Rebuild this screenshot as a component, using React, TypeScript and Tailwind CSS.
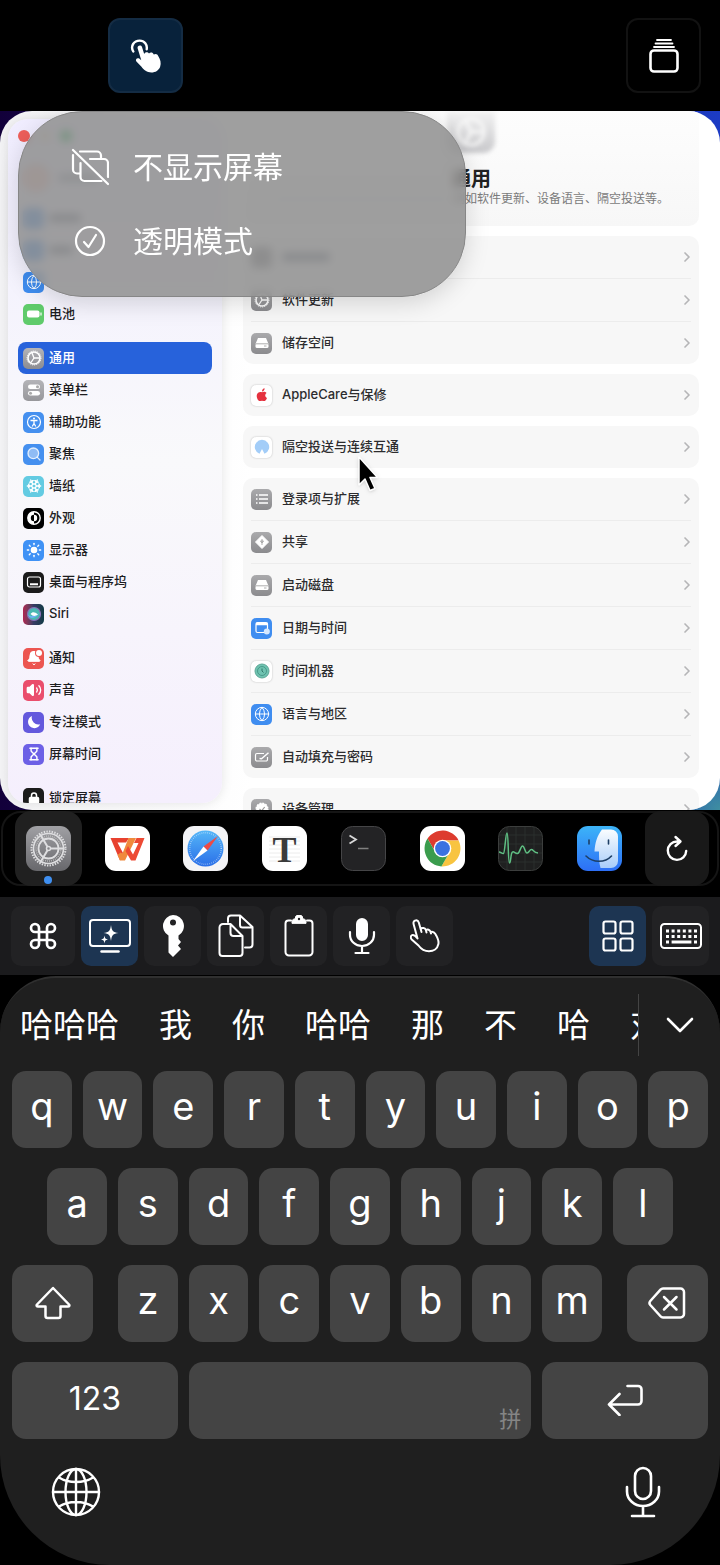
import type { ReactNode } from 'react';
import { Bell, ChevronRight, Command, Hourglass, Lock, Search, Snowflake, Sun, Volume2, Globe } from 'lucide-react';
import clsx from 'clsx';

/* ---------- Small tile glyphs (all on a 20x20 canvas) ---------- */

function Glyph({ children }: { children: ReactNode }) {
  return (
    <svg viewBox="0 0 20 20" className="h-5 w-5" fill="none" stroke="white" aria-hidden="true">
      {children}
    </svg>
  );
}

const gearGlyph = (
  <Glyph>
    <circle cx="10" cy="10" r="6" strokeWidth="1.6" />
    <circle cx="10" cy="10" r="7" strokeWidth="1" strokeDasharray="1 1" />
    <path d="M10 10 8 5M10 10l5.500 0M10 10l-3 4.500" strokeWidth="1.300" />
  </Glyph>
);

const diskGlyph = (
  <Glyph>
    <path d="M6 5h8l2.500 6h-13z" fill="white" stroke="none" />
    <rect x="3.500" y="10.500" width="13" height="4.500" rx="1.500" fill="white" stroke="none" />
    <path d="M4 10.800h12M12 13h2.500" stroke="#999" strokeWidth=".8" />
  </Glyph>
);

const globeGlyph = <Globe className="h-4 w-4 text-white" strokeWidth={1.5} />;

type Item = { label: string; tile: string; icon: ReactNode };

const sidebarGroups: Item[][] = [
  [
    { label: '通用', tile: 'bg-linear-to-b from-[#b4b4b8] to-[#8c8c91]', icon: gearGlyph },
    {
      label: '菜单栏',
      tile: 'bg-linear-to-b from-[#b4b4b8] to-[#97979b]',
      icon: (
        <Glyph>
          <rect x="4" y="4.500" width="12" height="4.500" rx="2.250" fill="white" stroke="none" />
          <rect x="4" y="11" width="12" height="4.500" rx="2.250" fill="white" stroke="none" />
          <circle cx="13.500" cy="6.750" r="1.500" fill="#aaa" stroke="none" />
          <circle cx="6.500" cy="13.250" r="1.500" fill="#aaa" stroke="none" />
        </Glyph>
      ),
    },
    {
      label: '辅助功能',
      tile: 'bg-[#4590ef]',
      icon: (
        <Glyph>
          <circle cx="10" cy="10" r="6.500" strokeWidth="1.200" />
          <circle cx="10" cy="6.500" r="1" fill="white" stroke="none" />
          <path d="M6.500 8.500h7M10 8.500v3l-1.800 3M10 11.500l1.800 3" strokeWidth="1.300" />
        </Glyph>
      ),
    },
    { label: '聚焦', tile: 'bg-[#4590ef]', icon: <Search className="h-4 w-4 fill-white/40 text-white/80" strokeWidth={2} /> },
    {
      label: '墙纸',
      tile: 'bg-[#63cbe2]',
      icon: (
        <span className="relative flex items-center justify-center">
          <Snowflake className="h-4 w-4 text-white" strokeWidth={2} />
          <span className="absolute h-3 w-3 rounded-full border border-white/80" />
        </span>
      ),
    },
    {
      label: '外观',
      tile: 'bg-black',
      icon: (
        <Glyph>
          <circle cx="10" cy="10" r="6.200" strokeWidth="1.400" />
          <path d="M10 3.800a6.200 6.200 0 0 0 0 12.400v-3a3.200 3.200 0 0 1 0-6.400z" fill="white" stroke="none" />
          <path d="M10 6.800a3.200 3.200 0 0 1 0 6.400z" fill="white" stroke="none" />
        </Glyph>
      ),
    },
    { label: '显示器', tile: 'bg-[#4092f5]', icon: <Sun className="h-4 w-4 fill-white text-white" strokeWidth={2} /> },
    {
      label: '桌面与程序坞',
      tile: 'bg-[#1b1b1b]',
      icon: (
        <Glyph>
          <rect x="3.500" y="5" width="13" height="10" rx="2" strokeWidth="1.200" />
          <path d="M6 12.300h8" strokeWidth="2" />
        </Glyph>
      ),
    },
    {
      label: 'Siri',
      tile: 'bg-linear-to-r from-[#b0204f] via-[#363b63] to-[#0e3a45]',
      icon: (
        <Glyph>
          <circle cx="10" cy="10" r="6.500" fill="#4bb8b2" stroke="#8b6cb8" strokeWidth="1.200" />
          <path d="M4 11c3 2 8 1 11-2-2 5-9 7-11 2z" fill="#6db2f5" stroke="none" />
          <path d="M6.500 10c2-2.500 4-2.500 7.500.5-3 2-5 2-7.500-.5z" fill="white" stroke="none" />
        </Glyph>
      ),
    },
  ],
  [
    {
      label: '通知',
      tile: 'bg-[#ec5550]',
      icon: (
        <span className="relative flex">
          <Bell className="h-4 w-4 fill-white text-white" strokeWidth={1.5} />
          <span className="absolute top-0 right-0 h-1.5 w-1.5 rounded-full bg-white ring-1 ring-[#ec5550]" />
        </span>
      ),
    },
    { label: '声音', tile: 'bg-[#ea4e6c]', icon: <Volume2 className="h-4 w-4 fill-white text-white [&>path:not(:first-child)]:fill-none" strokeWidth={2} /> },
    {
      label: '专注模式',
      tile: 'bg-[#6459dd]',
      icon: (
        <Glyph>
          <path d="M8 4a6.300 6.300 0 1 0 8.200 8.200A6.600 6.600 0 0 1 8 4z" fill="white" stroke="none" />
        </Glyph>
      ),
    },
    { label: '屏幕时间', tile: 'bg-[#6d60e6]', icon: <Hourglass className="h-3.5 w-3.5 text-white" strokeWidth={2.5} /> },
  ],
  [{ label: '锁定屏幕', tile: 'bg-[#1b1b1b]', icon: <Lock className="h-3 w-3 text-white [&>rect]:fill-white" strokeWidth={3} /> }],
];

const grayTile = 'bg-linear-to-b from-[#aaaaac] to-[#8b8b8e]';
const whiteTile = 'bg-white shadow-[0_0_2px_rgba(0,0,0,0.25)]';

const settingGroups: Item[][] = [
  [
    { label: '', tile: 'bg-[#8b8b8e]', icon: null },
    { label: '软件更新', tile: grayTile, icon: gearGlyph },
    { label: '储存空间', tile: grayTile, icon: diskGlyph },
  ],
  [
    {
      label: 'AppleCare与保修',
      tile: whiteTile,
      icon: (
        <svg viewBox="0 0 20 20" className="h-5 w-5" fill="#e5323f" aria-hidden="true">
          <path d="M10 7.300c1-.6 3.200-1.200 4.600.6-2 1.400-1.700 4 .4 5-.6 1.700-1.800 3.200-2.900 3.200-.8 0-1.300-.4-2.100-.4s-1.400.4-2.100.4c-1.800 0-3.600-3.600-3.100-6.200.5-2.600 3.200-3.500 5.200-2.600zM10 6.500c-.1-1.700 1.200-3 2.600-3.200.2 1.800-1.100 3.200-2.600 3.200z" />
        </svg>
      ),
    },
  ],
  [
    {
      label: '隔空投送与连续互通',
      tile: whiteTile,
      icon: (
        <svg viewBox="0 0 20 20" className="h-5 w-5" aria-hidden="true">
          <path d="M7.500 16.800a7.200 7.200 0 1 1 5 0L10 12z" fill="#a3cdf8" />
        </svg>
      ),
    },
  ],
  [
    {
      label: '登录项与扩展',
      tile: grayTile,
      icon: (
        <Glyph>
          <path d="M7 6h9M7 10h9M7 14h9M4 6h1.500M4 10h1.500M4 14h1.500" strokeWidth="1.300" />
        </Glyph>
      ),
    },
    {
      label: '共享',
      tile: grayTile,
      icon: (
        <Glyph>
          <path d="m10 3.500 6.500 6.500-6.500 6.500L3.500 10z" fill="white" strokeLinejoin="round" />
          <path d="M10 7v6M8.500 9h3l-1.500 2z" stroke="#999" strokeWidth=".8" />
        </Glyph>
      ),
    },
    { label: '启动磁盘', tile: grayTile, icon: diskGlyph },
    {
      label: '日期与时间',
      tile: 'bg-[#3f8df0]',
      icon: (
        <Glyph>
          <rect x="4" y="4.500" width="11.500" height="10" rx="1.500" strokeWidth="1.200" />
          <path d="M4 6h11.500" strokeWidth="2.500" />
          <circle cx="14.800" cy="13.500" r="3" fill="#d5e8ff" stroke="none" />
        </Glyph>
      ),
    },
    {
      label: '时间机器',
      tile: whiteTile,
      icon: (
        <Glyph>
          <circle cx="10" cy="10" r="7" fill="#6fc3b1" stroke="#5ea797" />
          <circle cx="10" cy="10" r="4.500" stroke="#3f8f7f" strokeWidth=".8" />
          <path d="M10 7.500V10l1.500 1.500" stroke="#2f7668" />
        </Glyph>
      ),
    },
    { label: '语言与地区', tile: 'bg-[#3f8df0]', icon: globeGlyph },
    {
      label: '自动填充与密码',
      tile: grayTile,
      icon: (
        <Glyph>
          <path d="M12 6.500H5A1.500 1.500 0 0 0 3.500 8v4.500A1.500 1.500 0 0 0 5 14h9a1.500 1.500 0 0 0 1.500-1.500V10" strokeWidth="1.200" />
          <path d="m7.500 11.500 2 .2 7-6" strokeWidth="1.500" />
        </Glyph>
      ),
    },
  ],
  [
    {
      label: '设备管理',
      tile: grayTile,
      icon: (
        <Glyph>
          <circle cx="10" cy="10" r="5.800" fill="white" strokeWidth="1.500" strokeDasharray="2 1" />
          <path d="m7.500 10 2 2 3.200-4" stroke="#999" strokeWidth="1.200" />
        </Glyph>
      ),
    },
  ],
];

function Tile({ className, children }: { className: string; children?: ReactNode }) {
  return (
    <span className={clsx('flex h-[21px] w-[21px] shrink-0 items-center justify-center overflow-hidden rounded-[5px]', className)}>
      {children}
    </span>
  );
}

/* ---------- Mirrored desktop ---------- */

function Sidebar() {
  return (
    <nav className="mt-2 mb-[7px] ml-2 w-[214px] shrink-0 overflow-hidden rounded-[20px] bg-linear-to-b from-[#f0edff] via-[#f9f9fb] via-50% to-[#f5effd] px-2.5 shadow-[0_0_12px_rgba(0,0,0,0.1)]">
      <div className="flex gap-[9px] pt-[11px]">
        <span className="h-3 w-3 rounded-full bg-[#ee5f5b]" />
        <span className="h-3 w-3 rounded-full bg-[#f5bf4f]/30" />
        <span className="h-3 w-3 rounded-full bg-[#12b045]" />
      </div>
      {/* account row, scrolled under the menu */}
      <div className="flex h-[60px] items-center gap-2 px-1 pt-3">
        <span className="h-7 w-7 rounded-full bg-[#f3c5bd]" />
        <span className="h-2 w-10 rounded bg-gray-400" />
      </div>
      {['w-8', 'w-6'].map((width) => (
        <div key={width} className="flex h-8 items-center gap-[5px] px-[5px]">
          <Tile className="bg-[#4590ef]" />
          <span className={clsx('h-2 rounded bg-gray-500', width)} />
        </div>
      ))}
      <div className="flex h-8 items-center px-[5px]">
        <Tile className="bg-[#3f8df0]">{globeGlyph}</Tile>
      </div>
      <a href="#battery" className="flex h-8 items-center gap-[5px] px-[5px] text-[13px] font-medium text-[#1d1d1f]">
        <Tile className="bg-[#5fcb6b]">
          <Glyph>
            <rect x="3" y="6.500" width="12.500" height="7" rx="2" fill="white" stroke="none" />
            <path d="M17 8.500v3" strokeWidth="1.200" />
          </Glyph>
        </Tile>
        电池
      </a>
      {sidebarGroups.map((group, index) => (
        <div key={index} className="mt-3">
          {group.map((item) => (
            <a
              key={item.label}
              href={`#${item.label}`}
              className={clsx(
                'flex h-8 items-center gap-[5px] rounded-lg px-[5px] text-[13px] font-medium',
                item.label === '通用' ? 'bg-[#2762db] text-white' : 'text-[#1d1d1f]',
              )}
            >
              <Tile className={item.tile}>{item.icon}</Tile>
              {item.label}
            </a>
          ))}
        </div>
      ))}
    </nav>
  );
}

function SettingsPane() {
  return (
    <main className="mx-[21px] flex min-w-0 flex-1 flex-col gap-2.5">
      <section className="flex h-[115px] shrink-0 flex-col items-center rounded-b-[10px] bg-linear-to-b from-[#fdfdfd] to-[#f7f7f7]">
        <div className="flex h-[42px] w-12 items-center justify-center rounded-b-xl bg-linear-to-b from-[#f3f3f3] to-[#c8c8cb] blur-[2px]">
          <svg viewBox="0 0 32 32" className="h-8 w-8" fill="none" stroke="#f8f8f8" strokeWidth="3" aria-hidden="true">
            <circle cx="16" cy="16" r="13" />
            <path d="m16 16-5-10M16 16h12M16 16l-5 10" />
          </svg>
        </div>
        <h1 className="mt-3.5 text-xl leading-6 font-bold text-[#222]">通用</h1>
        <p className="flex items-center text-xs leading-4 whitespace-nowrap text-[#7b7b7b]">
          <span className="mr-1 h-1 w-44 rounded bg-gray-200" />
          例如软件更新、设备语言、隔空投送等。
        </p>
      </section>
      {settingGroups.map((group, index) => (
        <section key={index} className="shrink-0 divide-y divide-[#ececec] rounded-[10px] bg-[#f7f7f7] px-2">
          {group.map((item) => (
            <a
              key={item.label}
              href={`#${item.label}`}
              className="box-content flex h-[42px] items-center gap-2.5 text-[13px] font-medium text-[#2c2c2e]"
            >
              <Tile className={item.tile}>{item.icon}</Tile>
              <span className="flex-1">
                {item.label || <span className="block h-2 w-12 rounded bg-gray-500" />}
              </span>
              <ChevronRight className="-mr-1 h-4 w-4 text-[#b5b5b7]" strokeWidth={2.5} />
            </a>
          ))}
        </section>
      ))}
    </main>
  );
}

function DisplayMenu() {
  return (
    <div className="absolute top-0 left-[18px] flex w-[448px] flex-col rounded-[64px] border border-[#868686] bg-[#8e8e8e]/85 pt-[18px] pb-[18px] text-3xl text-white shadow-[0_6px_24px_rgba(0,0,0,0.15)] backdrop-blur-[4px]">
      <button type="button" className="flex h-[74px] items-center gap-6 pl-[52px]">
        <svg viewBox="0 0 38 38" className="h-[38px] w-[38px]" fill="none" stroke="white" strokeWidth="2.200" strokeLinecap="round" strokeLinejoin="round" aria-hidden="true">
          <path d="M2 2 37 36" />
          <path d="M2 7v14.500a4 4 0 0 0 4 4h2.500M9 3.500h17a4 4 0 0 1 4 4V10M19 11h14a4 4 0 0 1 4 4v14M9.500 15v14a4 4 0 0 0 4 4h17" />
        </svg>
        不显示屏幕
      </button>
      <button type="button" className="flex h-[74px] items-center gap-6 pl-[52px]">
        <svg viewBox="0 0 38 38" className="h-[38px] w-[38px]" fill="none" stroke="white" strokeWidth="2.200" strokeLinecap="round" strokeLinejoin="round" aria-hidden="true">
          <circle cx="19" cy="19" r="14" />
          <path d="m13 20 4.500 5 7.500-12" />
        </svg>
        透明模式
      </button>
    </div>
  );
}

function RemoteScreen() {
  return (
    <div className="relative h-[699px] shrink-0 overflow-hidden bg-[radial-gradient(circle_at_bottom_right,#3f8fa0,transparent_80px),linear-gradient(to_right,#12003a,#1c3bc4)]">
      <div className="flex h-full overflow-hidden rounded-[32px] bg-linear-to-r from-[#f4f4f6] via-white via-35% to-white">
        <Sidebar />
        <SettingsPane />
      </div>
      <svg viewBox="0 0 22 38" className="absolute top-[344px] left-[357px] h-[38px] w-[22px] drop-shadow" aria-hidden="true">
        <path d="M2 2v28l6-6 5 11.500 5-2-5-11h7.500z" fill="black" stroke="white" strokeWidth="1.500" strokeLinejoin="round" />
      </svg>
      <DisplayMenu />
    </div>
  );
}

/* ---------- App switcher ---------- */

const apps: { name: string; icon: ReactNode }[] = [
  {
    name: '系统设置',
    icon: (
      <>
        <defs>
          <linearGradient id="settings-bg" x2="0" y2="1">
            <stop stopColor="#a0a0a4" />
            <stop offset="1" stopColor="#68686c" />
          </linearGradient>
        </defs>
        <rect width="45" height="45" rx="11" fill="url(#settings-bg)" />
        <g fill="none" stroke="#dedee0">
          <circle cx="22.500" cy="22.500" r="17" strokeWidth="2" strokeDasharray="1.400 1.270" />
          <circle cx="22.500" cy="22.500" r="15" strokeWidth="1.600" />
          <circle cx="22.500" cy="22.500" r="12.500" strokeWidth="1.500" strokeDasharray="1 1" stroke="#bbb" />
          <circle cx="22.500" cy="22.500" r="10" strokeWidth="1.800" />
          <circle cx="22.500" cy="22.500" r="2" strokeWidth="1.500" />
          <path d="M21.500 20.800 14 8M24.500 22.500h14M21.500 24.300 14 37" strokeWidth="2" />
        </g>
      </>
    ),
  },
  {
    name: 'WPS Office',
    icon: (
      <>
        <rect width="45" height="45" rx="11" fill="white" />
        <path d="M5.500 12H24l-3 4.500h-8.500L18 27l-3 7.500z" fill="#e8412f" />
        <path d="M23.500 12H31L20 34.500h-5L12.500 29l3-2.500 2 1z" fill="#f08a3c" />
        <path d="m23 20 5 8.500L33.500 17H29l2.500-5h8L30.500 34.500H26L20.500 25z" fill="#ed4a34" />
      </>
    ),
  },
  {
    name: 'Safari',
    icon: (
      <>
        <defs>
          <linearGradient id="safari-bg" x2="0" y2="1">
            <stop stopColor="#55b6f8" />
            <stop offset="1" stopColor="#2a6fe8" />
          </linearGradient>
        </defs>
        <rect width="45" height="45" rx="11" fill="#f4f4f6" />
        <circle cx="22.500" cy="22.500" r="18" fill="url(#safari-bg)" />
        <circle cx="22.500" cy="22.500" r="15.800" fill="none" stroke="white" strokeOpacity=".6" strokeWidth="1.500" strokeDasharray=".6 1.400" />
        <path d="M35 10 20.500 20.500l4 4z" fill="#ee4a44" />
        <path d="m10 35 10.500-14.500 4 4z" fill="white" />
      </>
    ),
  },
  {
    name: 'Typora',
    icon: (
      <>
        <rect width="45" height="45" rx="11" fill="white" />
        <path d="M7 11h31M7 15h31M7 19h31M7 23h31M7 27h31M7 31h31M7 35h31" stroke="#ececec" />
        <text x="22.500" y="35.500" textAnchor="middle" fontFamily="Liberation Serif, serif" fontWeight="700" fontSize="36" fill="#3b3b3b">
          T
        </text>
      </>
    ),
  },
  {
    name: '终端',
    icon: (
      <>
        <rect x=".5" y=".5" width="44" height="44" rx="11" fill="#232325" stroke="#454547" />
        <path d="m8.500 9.500 6.500 4-6.500 4" fill="none" stroke="#d8d8d8" strokeWidth="1.800" />
        <path d="M17 22.500h10.500" stroke="#808080" strokeWidth="1.500" />
      </>
    ),
  },
  {
    name: 'Chrome',
    icon: (
      <>
        <rect width="45" height="45" rx="11" fill="white" />
        <g transform="translate(-1.500 -1.500)">
          <path d="M9.020 14.060A18 18 0 0 1 40.100 16H24l-6.930 12z" fill="#dd3b2e" />
          <path d="M40.100 16a18 18 0 0 1-17.220 25.940L30.930 28 24 16z" fill="#f8c440" />
          <path d="M22.880 41.940A18 18 0 0 1 9.020 14.060L17.070 28h13.860z" fill="#3a9c4d" />
          <circle cx="24" cy="24" r="8.800" fill="white" />
          <circle cx="24" cy="24" r="7.400" fill="#3a72e0" />
        </g>
      </>
    ),
  },
  {
    name: '活动监视器',
    icon: (
      <>
        <rect x=".5" y=".5" width="44" height="44" rx="11" fill="#1f2020" stroke="#3c3e3d" />
        <path d="M9 1v43M18 1v43M27 1v43M36 1v43M1 9h43M1 18h43M1 27h43M1 36h43" stroke="#2d3430" strokeWidth=".8" />
        <path d="M1 26c2 0 3 2 4.500 1.500C7 27 7.500 7 9 7s1 30 2.500 30 1-10 3-11c1.500-1 3 2 5 1.500 2.500-.5 3-7.500 5-7.500s2.500 7 4.500 7 2.500-3.500 4.500-3.500 2 3 6.500 3.500" fill="none" stroke="#5fbf83" strokeWidth="1.500" />
      </>
    ),
  },
  {
    name: '访达',
    icon: (
      <>
        <defs>
          <linearGradient id="finder-left" x2="0" y2="1">
            <stop stopColor="#3cb4f8" />
            <stop offset="1" stopColor="#2d6ff6" />
          </linearGradient>
          <linearGradient id="finder-right" x2="0" y2="1">
            <stop stopColor="#fafdff" />
            <stop offset="1" stopColor="#a9cdfa" />
          </linearGradient>
        </defs>
        <rect width="45" height="45" rx="11" fill="url(#finder-left)" />
        <path d="M25 3.500C20 10 18 17 17.500 25.500H22c0 6 0 11 1.500 16.500H34a7 7 0 0 0 7-7V10.500a7 7 0 0 0-7-7z" fill="url(#finder-right)" />
        <path d="M12 14v4M31.500 14v4" stroke="#1d3f66" strokeWidth="1.600" strokeLinecap="round" />
        <path d="M9 30c7 7 19 7 25.500 0" fill="none" stroke="#1d3f66" strokeWidth="1.600" strokeLinecap="round" />
      </>
    ),
  },
];

function AppSwitcher() {
  return (
    <div className="mx-px mt-px flex h-[75px] shrink-0 gap-3 rounded-[20px] border-2 border-[#151515] pr-2 pl-3">
      {apps.map((app, index) => (
        <button
          key={app.name}
          type="button"
          aria-label={app.name}
          className={clsx(
            'relative -my-0.5 flex flex-1 items-center justify-center rounded-2xl',
            index === 0 && 'bg-[#202020]',
          )}
        >
          <svg viewBox="0 0 45 45" className="h-[45px] w-[45px]" aria-hidden="true">
            {app.icon}
          </svg>
          {index === 0 && <span className="absolute bottom-0.5 h-2 w-2 rounded-full bg-[#3f8ff0]" />}
        </button>
      ))}
      <button type="button" aria-label="刷新" className="-my-0.5 flex w-16 items-center justify-center rounded-2xl bg-[#191919]">
        <svg viewBox="0 0 24 28" className="h-7 w-6" fill="none" stroke="white" strokeWidth="2.400" strokeLinecap="round" strokeLinejoin="round" aria-hidden="true">
          <path d="M13 6.500h-1A9.200 9.200 0 1 0 21.200 16M10.500 2l5 4.500-5 4.500" />
        </svg>
      </button>
    </div>
  );
}

/* ---------- Toolbar ---------- */

const outline = { fill: 'none', stroke: 'white', strokeWidth: 2, strokeLinecap: 'round', strokeLinejoin: 'round' } as const;

const tools: { name: string; active?: boolean; wide?: boolean; icon: ReactNode }[] = [
  {
    name: 'Command',
    wide: true,
    icon: <Command className="h-8 w-8 text-white" strokeWidth={2} />,
  },
  {
    name: '显示增强',
    active: true,
    icon: (
      <svg viewBox="0 0 44 36" className="h-9 w-11" {...outline}>
        <rect x="2" y="2" width="40" height="26" rx="3" />
        <path d="M13.500 33.500h17" strokeWidth="2.500" />
        <path d="M23 7c.8 6 2 7.200 7.500 8-5.500.8-6.700 2-7.500 8-.8-6-2-7.200-7.500-8 5.500-.8 6.700-2 7.500-8zM16.500 17.500c.5 3 1 3.500 3.500 4-2.500.5-3 1-3.500 4-.5-3-1-3.500-3.500-4 2.500-.5 3-1 3.500-4z" fill="white" stroke="none" />
      </svg>
    ),
  },
  {
    name: '密码',
    icon: (
      <svg viewBox="0 0 22 42" className="h-[42px] w-[22px]" aria-hidden="true">
        <path fillRule="evenodd" d="M11 0a11 11 0 0 1 5.500 20.500V24l2.500 3-3 3.500 3 3.500-8 8-4.500-4.500v-17A11 11 0 0 1 11 0zm0 4.500a3 3 0 1 0 0 6 3 3 0 0 0 0-6z" fill="white" />
      </svg>
    ),
  },
  {
    name: '复制',
    icon: (
      <svg viewBox="0 0 36 44" className="h-11 w-9" {...outline}>
        <path d="M5 10h7.500l12 12v17a3 3 0 0 1-3 3H4.500a3 3 0 0 1-3-3V13.500A3.500 3.500 0 0 1 5 10zM12.500 10v9a3 3 0 0 0 3 3h9" />
        <path d="M10 8V4.500A3 3 0 0 1 13 1.500h9L34.500 13v17.500a3 3 0 0 1-3 3H27M22 2v9a2.500 2.500 0 0 0 2.500 2.500h9.500" />
      </svg>
    ),
  },
  {
    name: '剪贴板',
    icon: (
      <svg viewBox="0 0 30 42" className="h-[42px] w-[30px]" {...outline}>
        <path d="M7 5.500H4.500a3 3 0 0 0-3 3V37a3.500 3.500 0 0 0 3.500 3.500h20a3.500 3.500 0 0 0 3.500-3.500V8.500a3 3 0 0 0-3-3H23" />
        <path d="M8 8V6.500C8 5 9 4 11 4a4 4 0 0 1 8 0c2 0 3 1 3 2.500V8z" fill="white" strokeWidth="1" />
        <circle cx="15" cy="4" r="1.200" fill="#222224" stroke="none" />
      </svg>
    ),
  },
  {
    name: '语音',
    icon: (
      <svg viewBox="0 0 28 38" className="h-[38px] w-7" {...outline}>
        <rect x="9" y="2" width="10" height="21" rx="5" fill="white" />
        <path d="M2 15v3a12 11 0 0 0 24 0v-3M14 29v6.500M7.500 36h13" strokeWidth="2.200" />
      </svg>
    ),
  },
  {
    name: '手势',
    icon: (
      <svg viewBox="0 0 30 34" className="h-[34px] w-[30px]" {...outline}>
        <path d="M7.500 19.500 3.700 5.500C3 3 4 1.700 5.500 1.400 7 1 8.300 2 8.800 3.500l2.700 9.500M10.600 10c1.500-1.500 4.300-1.300 5.200.8l.7 2.700M16 11c1.700-.9 3.700-.3 4.400 1.500l.6 2M20.800 13c1.900-.6 3.300 0 4.400 1.800 2 3.200 3.900 6.600 3.200 10.200-.9 4.600-5 7.300-9.400 7.300-5 0-8-2.300-10.500-5.800l-6.800-6c-1.500-1.700-1-3.700.4-4.300 1.700-.7 3.400.8 5.400 3.300" />
      </svg>
    ),
  },
];

const toolsRight: typeof tools = [
  {
    name: '布局',
    active: true,
    icon: (
      <svg viewBox="0 0 32 32" className="h-8 w-8" {...outline} strokeWidth="2.200">
        <rect x="1.500" y="1.500" width="12" height="12" rx="2" />
        <rect x="18.500" y="1.500" width="12" height="12" rx="2" />
        <rect x="1.500" y="18.500" width="12" height="12" rx="2" />
        <rect x="18.500" y="18.500" width="12" height="12" rx="2" />
      </svg>
    ),
  },
  {
    name: '键盘',
    icon: (
      <svg viewBox="0 0 44 28" className="h-7 w-11" {...outline}>
        <rect x="2" y="2" width="40" height="24" rx="3.500" />
        <path d="M7 9h31M7 14.500h31" strokeWidth="3" strokeDasharray="3 2.600" strokeLinecap="butt" />
        <path d="M7 20h3M12.600 20h19.800M35 20h3" strokeWidth="3" strokeLinecap="butt" />
      </svg>
    ),
  },
];

function ToolButton({ tool }: { tool: (typeof tools)[number] }) {
  return (
    <button
      type="button"
      aria-label={tool.name}
      className={clsx(
        'flex h-[60px] items-center justify-center rounded-[10px]',
        tool.wide ? 'w-16' : 'w-[57px]',
        tool.active ? 'bg-[#1d3552]' : 'bg-[#222224]',
      )}
    >
      {tool.icon}
    </button>
  );
}

function Toolbar() {
  return (
    <div className="mt-[11px] flex h-[78px] shrink-0 items-center gap-1.5 bg-[#1b1b1d] px-[11px]">
      {tools.map((tool) => (
        <ToolButton key={tool.name} tool={tool} />
      ))}
      <span className="flex-1" />
      {toolsRight.map((tool) => (
        <ToolButton key={tool.name} tool={tool} />
      ))}
    </div>
  );
}

/* ---------- Keyboard ---------- */

const candidates = ['哈哈哈', '我', '你', '哈哈', '那', '不', '哈', '对'];

function Key({ children, className = 'col-span-2', label }: { children?: ReactNode; className?: string; label?: string }) {
  return (
    <button
      type="button"
      aria-label={label}
      className={clsx('flex h-[77px] items-center justify-center rounded-[14px] bg-[#444444] pb-1.5 text-[38px] text-white', className)}
    >
      {children}
    </button>
  );
}

function Keyboard() {
  return (
    <div className="mt-px flex flex-1 flex-col rounded-t-[56px] rounded-b-[110px] border-t-2 border-[#303030] bg-[#1f1f1f]">
      <div className="flex h-[93px] shrink-0 items-center pl-5 text-white">
        <div className="flex min-w-0 flex-1 gap-10 overflow-hidden text-[33px] leading-[48px] whitespace-nowrap">
          {candidates.map((word) => (
            <button key={word} type="button" className="shrink-0">
              {word}
            </button>
          ))}
        </div>
        <span className="h-[62px] w-px bg-[#444]" />
        <button type="button" aria-label="展开候选" className="flex h-12 w-[81px] items-center justify-center">
          <svg viewBox="0 0 28 18" className="h-[18px] w-7" {...outline} strokeWidth="2.600">
            <path d="m2 3 12 12L26 3" />
          </svg>
        </button>
      </div>

      <div className="grid grid-cols-20 gap-x-[11px] gap-y-5 px-3">
        {[...'qwertyuiop'].map((letter) => (
          <Key key={letter}>{letter}</Key>
        ))}
        {[...'asdfghjkl'].map((letter, index) => (
          <Key key={letter} className={index === 0 ? 'col-span-2 col-start-2' : 'col-span-2'}>
            {letter}
          </Key>
        ))}
        <Key className="col-span-3 col-start-1 mr-3.5" label="Shift">
          <svg viewBox="0 0 36 34" className="mt-1 h-[34px] w-9" {...outline} strokeWidth="2.500">
            <path d="M18 2 34 18.500c.8 1 .3 2-1 2h-7.500V30a2 2 0 0 1-2 2h-11a2 2 0 0 1-2-2v-9.500H3c-1.300 0-1.800-1-1-2z" />
          </svg>
        </Key>
        {[...'zxcvbnm'].map((letter) => (
          <Key key={letter}>{letter}</Key>
        ))}
        <Key className="col-span-3 ml-3.5" label="删除">
          <svg viewBox="0 0 38 32" className="mt-1 h-8 w-[38px]" {...outline} strokeWidth="2.500">
            <path d="M15 1.500h17.500A3.500 3.500 0 0 1 36 5v22a3.500 3.500 0 0 1-3.500 3.500H15c-1 0-1.800-.4-2.500-1.200L2.300 18c-1-1.200-1-2.800 0-4L12.500 2.700C13.200 1.900 14 1.500 15 1.500z" />
            <path d="m16 10 12.500 12.500M28.500 10 16 22.500" />
          </svg>
        </Key>
        <button type="button" className="col-span-5 flex h-[77px] items-center justify-center rounded-[14px] bg-[#444444] pb-1 text-[32px] text-white">
          123
        </button>
        <button type="button" className="col-span-10 flex h-[77px] items-end justify-end rounded-[14px] bg-[#444444] px-2.5 pb-1.5 text-[22px] leading-7 text-[#858585]">
          拼
        </button>
        <Key className="col-span-5" label="换行">
          <svg viewBox="0 0 36 32" className="mt-1 h-8 w-9" {...outline} strokeWidth="2.600">
            <path d="M20.500 2H31a3.500 3.500 0 0 1 3.500 3.500V17a3.500 3.500 0 0 1-3.500 3.500H2M12.500 10 2 20.500 12.500 31" />
          </svg>
        </Key>
      </div>

      <div className="flex items-center justify-between px-[51px] pt-[27px] pb-[45px]">
        <button type="button" aria-label="切换键盘">
          <svg viewBox="0 0 50 50" className="h-[50px] w-[50px]" {...outline} strokeWidth="2.400">
            <circle cx="25" cy="25" r="23" />
            <ellipse cx="25" cy="25" rx="10.500" ry="23" />
            <path d="M25 2v46M2 25h46M8 10.500c9.500 6 24.500 6 34 0M8 39.500c9.500-6 24.500-6 34 0" />
          </svg>
        </button>
        <button type="button" aria-label="听写" className="mr-2">
          <svg viewBox="0 0 36 52" className="h-[52px] w-9" {...outline} strokeWidth="2.600">
            <rect x="10" y="2" width="16" height="31" rx="8" />
            <path d="M2 21v4.500a16 14.500 0 0 0 32 0V21M18 40v9.500M7 50h22" />
          </svg>
        </button>
      </div>
    </div>
  );
}

export default function App() {
  return (
    <div className="flex min-h-screen flex-col bg-black font-['Inter','Noto_Sans_CJK_SC',sans-serif]">
      <header className="flex h-[111px] shrink-0 items-center justify-between pr-[19px] pl-[108px]">
        <button
          type="button"
          aria-label="触控模式"
          className="flex h-[75px] w-[75px] items-center justify-center rounded-xl border-2 border-[#142c44] bg-[#08223b]"
        >
          <svg viewBox="129 38 32 36" className="h-9 w-8" aria-hidden="true">
            <path d="M132.300 51.500C129 46 133 40.600 138.700 40.600c4.800 0 7.800 4 7 8.600" fill="none" stroke="white" strokeWidth="2.400" strokeLinecap="round" />
            <path d="M136.600 48.200C136 45.500 140 44.300 141 47L143.200 54C144 51.600 147 51.600 148 53.600C149.300 52 152 52.300 152.800 54.600C154.500 53.200 156.600 54 157.200 56C159.500 59.500 160.300 63 159.200 66.500C158 70.400 154.500 72.500 150.300 72.500C146 72.500 142.800 70 140.500 66.800L135.400 61.600C134 59.600 136 57.300 138.200 58.600L140.300 60.200Z" fill="white" />
          </svg>
        </button>
        <button
          type="button"
          aria-label="窗口"
          className="flex h-[75px] w-[75px] items-center justify-center rounded-xl border-2 border-[#121212]"
        >
          <svg viewBox="0 0 32 36" className="h-9 w-8" {...outline}>
            <path d="M9 2h14M7.500 5.500h17M6 9h20" strokeWidth="1.800" />
            <rect x="2.500" y="12.500" width="27" height="21" rx="3.500" strokeWidth="2.600" />
          </svg>
        </button>
      </header>
      <RemoteScreen />
      <AppSwitcher />
      <Toolbar />
      <Keyboard />
    </div>
  );
}
